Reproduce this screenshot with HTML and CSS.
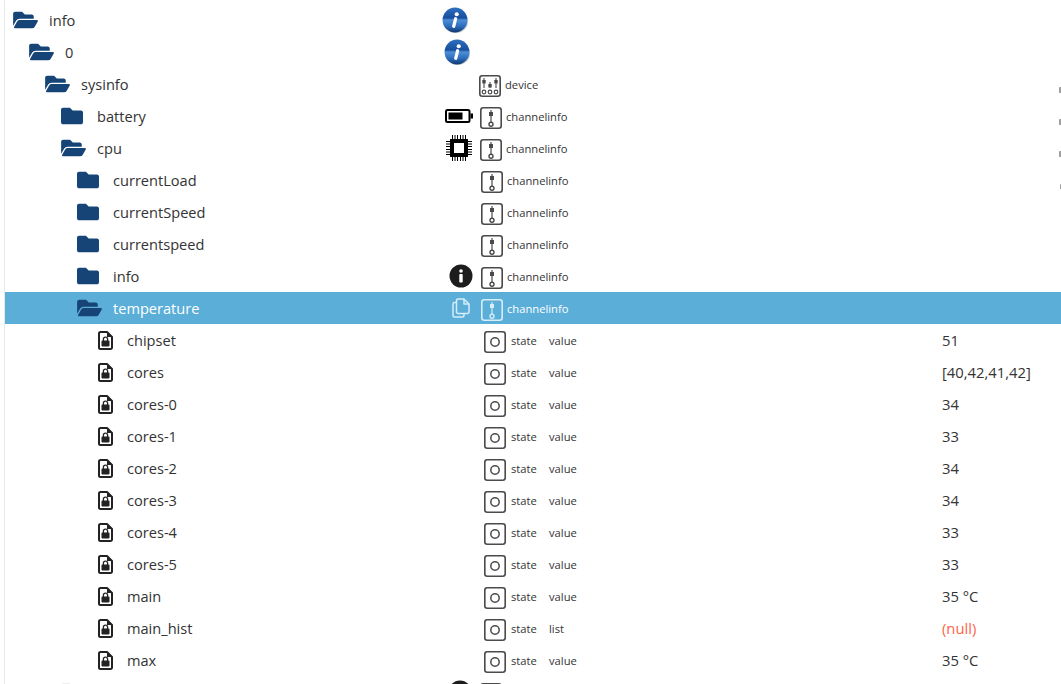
FILE: index.html
```html
<!DOCTYPE html>
<html lang="en">
<head>
    <meta charset="UTF-8">
    <meta name="viewport" content="width=device-width, initial-scale=1.0">
    <title>Objects</title>
    <link rel="stylesheet" href="styles.css">
</head>
<body>
    <svg class="icon-defs" aria-hidden="true">
        <defs>
            <linearGradient id="sphere" x1="0" y1="0" x2="0" y2="1">
                <stop offset="0%" stop-color="#2f6fc0"/>
                <stop offset="42%" stop-color="#174f9f"/>
                <stop offset="50%" stop-color="#4d8fd6"/>
                <stop offset="75%" stop-color="#2c6dbd"/>
                <stop offset="100%" stop-color="#0f376f"/>
            </linearGradient>
        </defs>
        <symbol id="i-open" viewBox="0 0 576 512"><path fill="currentColor" d="M572.694 292.093L500.27 416.248A63.997 63.997 0 0 1 444.989 448H45.025c-18.523 0-30.064-20.093-20.731-36.093l72.424-124.155A64 64 0 0 1 152 256h399.964c18.523 0 30.064 20.093 20.73 36.093zM152 224h328v-48c0-26.51-21.49-48-48-48H272l-64-64H48C21.49 64 0 85.49 0 112v278.046l69.077-118.418C86.214 242.25 117.989 224 152 224z"/></symbol>
        <symbol id="i-closed" viewBox="0 0 512 512"><path fill="currentColor" d="M464 128H272l-64-64H48C21.49 64 0 85.49 0 112v288c0 26.51 21.49 48 48 48h416c26.51 0 48-21.49 48-48V176c0-26.51-21.49-48-48-48z"/></symbol>
        <symbol id="i-file" viewBox="0 0 15 19">
            <path fill="none" stroke="currentColor" stroke-width="2" stroke-linejoin="round" d="M2.5 1H9l5 5v10.500a1.500 1.500 0 0 1-1.500 1.500h-10A1.500 1.500 0 0 1 1 16.500v-14A1.500 1.500 0 0 1 2.500 1z"/>
            <path fill="currentColor" d="M9 1l5 5H9z"/>
            <rect x="3.500" y="9.500" width="8" height="6" rx="1" fill="currentColor"/>
            <path fill="none" stroke="currentColor" stroke-width="1.300" d="M5.400 10V8.200a2.100 2.100 0 0 1 4.200 0V10"/>
        </symbol>
        <symbol id="i-info" viewBox="0 0 24 24">
            <ellipse cx="12.500" cy="13.500" rx="11.500" ry="10.500" fill="#8f959c" opacity=".5"/>
            <circle cx="12" cy="12" r="11.500" fill="url(#sphere)"/>
            <circle cx="13.600" cy="6.700" r="1.900" fill="#fff"/>
            <path fill="none" stroke="#fff" stroke-width="3" stroke-linecap="round" d="M12.600 10.800l-1.800 7"/>
        </symbol>
        <symbol id="i-device" viewBox="0 0 22 22">
            <rect x=".8" y=".8" width="20.400" height="20.400" rx="2.500" fill="none" stroke="currentColor" stroke-width="1.600"/>
            <path fill="none" stroke="currentColor" stroke-width="1.100" d="M5 3v10M11 7v6M17 3v10"/>
            <rect x="3.300" y="5" width="3.400" height="3.400" fill="currentColor"/>
            <rect x="9.300" y="9" width="3.400" height="3.400" fill="currentColor"/>
            <rect x="15.300" y="5" width="3.400" height="3.400" fill="currentColor"/>
            <circle cx="5" cy="17" r="1.800" fill="none" stroke="currentColor" stroke-width="1.200"/>
            <circle cx="11" cy="17" r="1.800" fill="none" stroke="currentColor" stroke-width="1.200"/>
            <circle cx="17" cy="17" r="1.800" fill="none" stroke="currentColor" stroke-width="1.200"/>
        </symbol>
        <symbol id="i-channel" viewBox="0 0 22 22">
            <rect x=".8" y=".8" width="20.400" height="20.400" rx="2.500" fill="none" stroke="currentColor" stroke-width="1.600"/>
            <path fill="none" stroke="currentColor" stroke-width="1.200" d="M11 3v13"/>
            <rect x="9" y="5" width="4" height="4" fill="currentColor"/>
            <circle cx="11" cy="17.300" r="2" fill="none" stroke="currentColor" stroke-width="1.400"/>
        </symbol>
        <symbol id="i-state" viewBox="0 0 22 22">
            <rect x=".8" y=".8" width="20.400" height="20.400" rx="2.500" fill="none" stroke="currentColor" stroke-width="1.600"/>
            <circle cx="11" cy="11" r="4.200" fill="none" stroke="currentColor" stroke-width="1.500"/>
        </symbol>
        <symbol id="i-battery" viewBox="0 0 28 14">
            <rect x="1" y="1" width="23.500" height="12" rx="1.500" fill="none" stroke="currentColor" stroke-width="2"/>
            <rect x="3.500" y="3.500" width="14" height="7" fill="currentColor"/>
            <rect x="25.500" y="4.500" width="2.500" height="5" fill="currentColor"/>
        </symbol>
        <symbol id="i-chip" viewBox="0 0 26 26">
            <path fill="none" stroke="currentColor" stroke-width="1" d="M6.500 0v26M9 0v26M11.500 0v26M14.500 0v26M17 0v26M19.500 0v26M0 6.500h26M0 9h26M0 11.500h26M0 14.500h26M0 17h26M0 19.500h26"/>
            <rect x="4" y="4" width="18" height="18" fill="#000"/>
            <rect x="8" y="8" width="10" height="10" fill="#fff"/>
        </symbol>
        <symbol id="i-dark-info" viewBox="0 0 24 24">
            <circle cx="12" cy="12" r="11.500" fill="currentColor"/>
            <circle cx="12" cy="7" r="1.800" fill="#fff"/>
            <rect x="10.300" y="10" width="3.400" height="8.500" rx=".8" fill="#fff"/>
        </symbol>
        <symbol id="i-copy" viewBox="0 0 18 20">
            <path fill="none" stroke="currentColor" stroke-width="1.500" stroke-linejoin="round" d="M6 1h6l5 5v8a1.500 1.500 0 0 1-1.500 1.500H6A1.500 1.500 0 0 1 4.500 14V2.500A1.500 1.500 0 0 1 6 1z"/>
            <path fill="none" stroke="currentColor" stroke-width="1.500" stroke-linejoin="round" d="M4.500 4.500H2.500A1.500 1.500 0 0 0 1 6v11.500A1.500 1.500 0 0 0 2.500 19h8a1.500 1.500 0 0 0 1.500-1.500v-2M12 1v5h5"/>
        </symbol>
    </svg>

    <div class="tree">
        <div class="row d0">
            <div class="name"><svg class="folder open"><use href="#i-open"/></svg><span>info</span></div>
            <div class="custom"><svg class="ic-info"><use href="#i-info"/></svg></div>
        </div>
        <div class="row d1">
            <div class="name"><svg class="folder open"><use href="#i-open"/></svg><span>0</span></div>
            <div class="custom"><svg class="ic-info"><use href="#i-info"/></svg></div>
        </div>
        <div class="row d2">
            <div class="name"><svg class="folder open"><use href="#i-open"/></svg><span>sysinfo</span></div>
            <div class="custom"></div>
            <svg class="type-icon"><use href="#i-device"/></svg>
            <span class="type-text device">device</span>
            <i class="edge"></i>
        </div>
        <div class="row d3">
            <div class="name"><svg class="folder"><use href="#i-closed"/></svg><span>battery</span></div>
            <div class="custom"><svg class="ic-battery"><use href="#i-battery"/></svg></div>
            <svg class="type-icon"><use href="#i-channel"/></svg>
            <span class="type-text">channelinfo</span>
            <i class="edge"></i>
        </div>
        <div class="row d3">
            <div class="name"><svg class="folder open"><use href="#i-open"/></svg><span>cpu</span></div>
            <div class="custom"><svg class="ic-chip"><use href="#i-chip"/></svg></div>
            <svg class="type-icon"><use href="#i-channel"/></svg>
            <span class="type-text">channelinfo</span>
            <i class="edge"></i>
        </div>
        <div class="row d4">
            <div class="name"><svg class="folder"><use href="#i-closed"/></svg><span>currentLoad</span></div>
            <div class="custom"></div>
            <svg class="type-icon"><use href="#i-channel"/></svg>
            <span class="type-text">channelinfo</span>
            <i class="edge short"></i>
        </div>
        <div class="row d4">
            <div class="name"><svg class="folder"><use href="#i-closed"/></svg><span>currentSpeed</span></div>
            <div class="custom"></div>
            <svg class="type-icon"><use href="#i-channel"/></svg>
            <span class="type-text">channelinfo</span>
        </div>
        <div class="row d4">
            <div class="name"><svg class="folder"><use href="#i-closed"/></svg><span>currentspeed</span></div>
            <div class="custom"></div>
            <svg class="type-icon"><use href="#i-channel"/></svg>
            <span class="type-text">channelinfo</span>
        </div>
        <div class="row d4">
            <div class="name"><svg class="folder"><use href="#i-closed"/></svg><span>info</span></div>
            <div class="custom"><svg class="ic-dark"><use href="#i-dark-info"/></svg></div>
            <svg class="type-icon"><use href="#i-channel"/></svg>
            <span class="type-text">channelinfo</span>
        </div>
        <div class="row d4 selected">
            <div class="name"><svg class="folder open"><use href="#i-open"/></svg><span>temperature</span></div>
            <div class="custom"><svg class="ic-copy"><use href="#i-copy"/></svg></div>
            <svg class="type-icon"><use href="#i-channel"/></svg>
            <span class="type-text">channelinfo</span>
        </div>
        <div class="row d5">
            <div class="name"><svg class="file"><use href="#i-file"/></svg><span>chipset</span></div>
            <div class="custom"></div>
            <svg class="type-icon"><use href="#i-state"/></svg>
            <span class="type-text state">state</span>
            <span class="role">value</span>
            <span class="value">51</span>
        </div>
        <div class="row d5">
            <div class="name"><svg class="file"><use href="#i-file"/></svg><span>cores</span></div>
            <div class="custom"></div>
            <svg class="type-icon"><use href="#i-state"/></svg>
            <span class="type-text state">state</span>
            <span class="role">value</span>
            <span class="value">[40,42,41,42]</span>
        </div>
        <div class="row d5">
            <div class="name"><svg class="file"><use href="#i-file"/></svg><span>cores-0</span></div>
            <div class="custom"></div>
            <svg class="type-icon"><use href="#i-state"/></svg>
            <span class="type-text state">state</span>
            <span class="role">value</span>
            <span class="value">34</span>
        </div>
        <div class="row d5">
            <div class="name"><svg class="file"><use href="#i-file"/></svg><span>cores-1</span></div>
            <div class="custom"></div>
            <svg class="type-icon"><use href="#i-state"/></svg>
            <span class="type-text state">state</span>
            <span class="role">value</span>
            <span class="value">33</span>
        </div>
        <div class="row d5">
            <div class="name"><svg class="file"><use href="#i-file"/></svg><span>cores-2</span></div>
            <div class="custom"></div>
            <svg class="type-icon"><use href="#i-state"/></svg>
            <span class="type-text state">state</span>
            <span class="role">value</span>
            <span class="value">34</span>
        </div>
        <div class="row d5">
            <div class="name"><svg class="file"><use href="#i-file"/></svg><span>cores-3</span></div>
            <div class="custom"></div>
            <svg class="type-icon"><use href="#i-state"/></svg>
            <span class="type-text state">state</span>
            <span class="role">value</span>
            <span class="value">34</span>
        </div>
        <div class="row d5">
            <div class="name"><svg class="file"><use href="#i-file"/></svg><span>cores-4</span></div>
            <div class="custom"></div>
            <svg class="type-icon"><use href="#i-state"/></svg>
            <span class="type-text state">state</span>
            <span class="role">value</span>
            <span class="value">33</span>
        </div>
        <div class="row d5">
            <div class="name"><svg class="file"><use href="#i-file"/></svg><span>cores-5</span></div>
            <div class="custom"></div>
            <svg class="type-icon"><use href="#i-state"/></svg>
            <span class="type-text state">state</span>
            <span class="role">value</span>
            <span class="value">33</span>
        </div>
        <div class="row d5">
            <div class="name"><svg class="file"><use href="#i-file"/></svg><span>main</span></div>
            <div class="custom"></div>
            <svg class="type-icon"><use href="#i-state"/></svg>
            <span class="type-text state">state</span>
            <span class="role">value</span>
            <span class="value">35 °C</span>
        </div>
        <div class="row d5">
            <div class="name"><svg class="file"><use href="#i-file"/></svg><span>main_hist</span></div>
            <div class="custom"></div>
            <svg class="type-icon"><use href="#i-state"/></svg>
            <span class="type-text state">state</span>
            <span class="role">list</span>
            <span class="value null">(null)</span>
        </div>
        <div class="row d5">
            <div class="name"><svg class="file"><use href="#i-file"/></svg><span>max</span></div>
            <div class="custom"></div>
            <svg class="type-icon"><use href="#i-state"/></svg>
            <span class="type-text state">state</span>
            <span class="role">value</span>
            <span class="value">35 °C</span>
        </div>
        <div class="row d3">
            <div class="name"><svg class="folder faded"><use href="#i-closed"/></svg><span></span></div>
            <div class="custom"><svg class="ic-dark"><use href="#i-dark-info"/></svg></div>
            <svg class="type-icon"><use href="#i-channel"/></svg>
        </div>
    </div>
</body>
</html>
```

FILE: styles.css
```css
html, body {
    height: 100%;
    margin: 0;
    overflow: hidden;
    background-color: #fff;
}
.icon-defs {
    position: absolute;
    width: 0;
    height: 0;
}
.tree {
    margin-left: 4px;
    padding-top: 4px;
    height: 100%;
    box-sizing: border-box;
    border-left: 1px solid #e8e8e8;
    font-family: "Open Sans", "Noto Sans", Arial, sans-serif;
    color: #333;
}
.row {
    display: flex;
    align-items: center;
    height: 32px;
}
.name {
    display: flex;
    align-items: center;
    flex: none;
    box-sizing: border-box;
    font-size: 14.6px;
    white-space: nowrap;
}
.d0 .name { width: 430px; padding-left: 8px; }
.d1 .name { width: 432px; padding-left: 24px; }
.d2 .name { width: 434px; padding-left: 40px; }
.d3 .name { width: 435px; padding-left: 56px; }
.d4 .name { width: 436px; padding-left: 72px; }
.d5 .name { width: 439px; padding-left: 93px; }
.folder {
    flex: none;
    width: 22px;
    height: 22px;
    margin-right: 14px;
    color: #164477;
}
.folder.open {
    width: 25px;
    margin-right: 11px;
}
.folder.faded {
    color: #b8c0c8;
}
.file {
    flex: none;
    width: 15px;
    height: 19px;
    margin-right: 14px;
    color: #222;
}
.custom {
    display: flex;
    justify-content: center;
    align-items: center;
    flex: none;
    width: 40px;
}
.ic-info {
    width: 26px;
    height: 26px;
}
.ic-battery {
    width: 28px;
    height: 14px;
    margin-left: -2px;
    color: #000;
}
.ic-chip {
    width: 26px;
    height: 26px;
    margin-left: -3px;
    color: #000;
}
.ic-dark {
    width: 24px;
    height: 24px;
    color: #1d1d1d;
}
.ic-copy {
    width: 18px;
    height: 20px;
    color: #d6edf8;
}
.type-icon {
    flex: none;
    width: 22px;
    height: 22px;
    margin-top: 4px;
    color: #4a4a4a;
}
.type-text {
    margin-left: 4px;
    font-size: 11.2px;
    white-space: nowrap;
}
.type-text.state {
    margin-left: 5px;
    width: 38px;
}
.role {
    font-size: 11.2px;
}
.value {
    margin-left: auto;
    width: 119px;
    font-size: 14.8px;
}
.value.null {
    color: #ff6347;
}
.edge {
    width: 2px;
    height: 6px;
    margin-left: auto;
    margin-top: 12px;
    background-color: #a0a0a0;
    border-radius: 1px 0 0 0;
}
.edge.short {
    width: 1px;
    height: 5px;
}
.selected {
    background-color: #5aaed8;
    color: #fff;
}
.selected .type-icon {
    color: #d6edf8;
}
```
